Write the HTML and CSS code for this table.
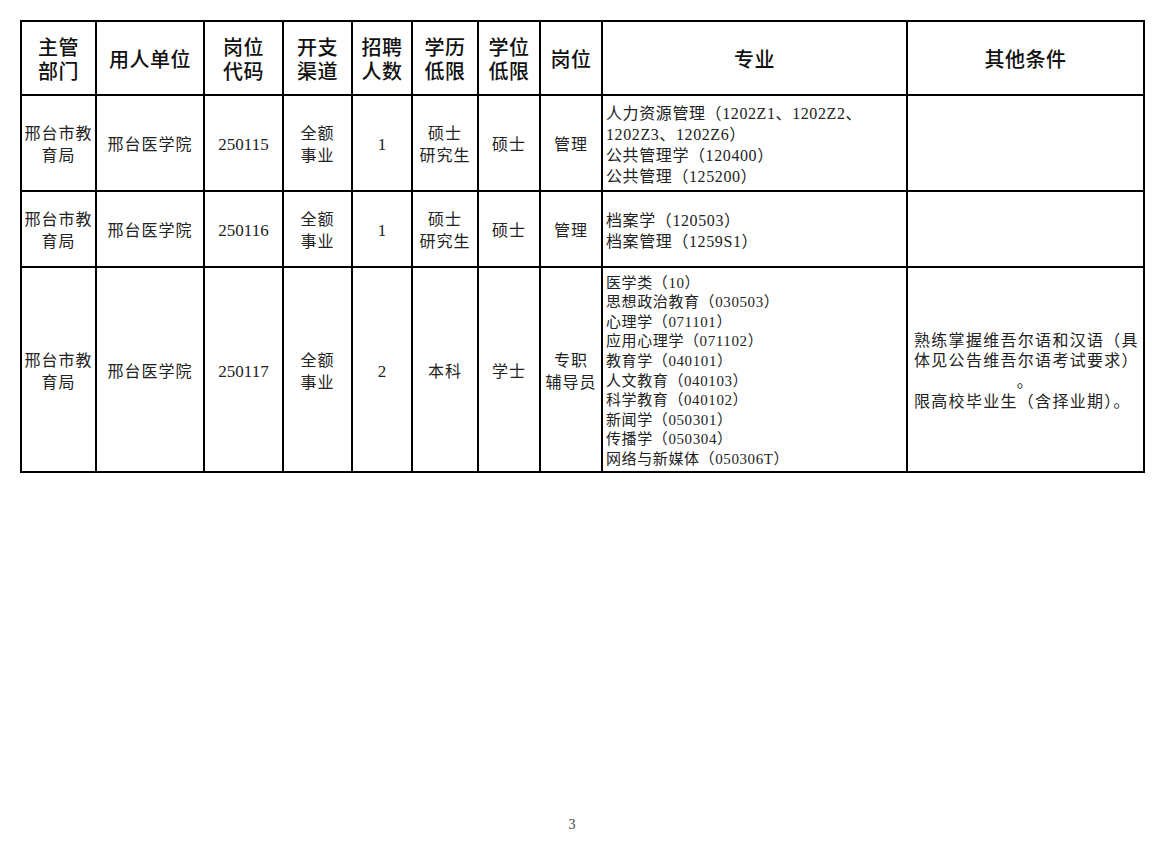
FILE: index.html
```html
<!DOCTYPE html>
<html lang="zh-CN">
<head>
<meta charset="utf-8">
<title>岗位表</title>
<link rel="stylesheet" href="styles.css">
</head>
<body>
<div class="page">
  <table class="posts">
    <colgroup>
      <col class="c1"><col class="c2"><col class="c3"><col class="c4"><col class="c5">
      <col class="c6"><col class="c7"><col class="c8"><col class="c9"><col class="c10">
    </colgroup>
    <thead>
      <tr class="head">
        <th>主管<br>部门</th>
        <th>用人单位</th>
        <th>岗位<br>代码</th>
        <th>开支<br>渠道</th>
        <th>招聘<br>人数</th>
        <th>学历<br>低限</th>
        <th>学位<br>低限</th>
        <th>岗位</th>
        <th>专业</th>
        <th>其他条件</th>
      </tr>
    </thead>
    <tbody>
      <tr class="r1">
        <td>邢台市教<br>育局</td>
        <td>邢台医学院</td>
        <td class="num">250115</td>
        <td>全额<br>事业</td>
        <td class="num">1</td>
        <td>硕士<br>研究生</td>
        <td>硕士</td>
        <td>管理</td>
        <td class="major">人力资源管理（1202Z1、1202Z2、<br>1202Z3、1202Z6）<br>公共管理学（120400）<br>公共管理（125200）</td>
        <td class="cond"></td>
      </tr>
      <tr class="r2">
        <td>邢台市教<br>育局</td>
        <td>邢台医学院</td>
        <td class="num">250116</td>
        <td>全额<br>事业</td>
        <td class="num">1</td>
        <td>硕士<br>研究生</td>
        <td>硕士</td>
        <td>管理</td>
        <td class="major">档案学（120503）<br>档案管理（1259S1）</td>
        <td class="cond"></td>
      </tr>
      <tr class="r3">
        <td>邢台市教<br>育局</td>
        <td>邢台医学院</td>
        <td class="num">250117</td>
        <td>全额<br>事业</td>
        <td class="num">2</td>
        <td>本科</td>
        <td>学士</td>
        <td>专职<br>辅导员</td>
        <td class="major small">医学类（10）<br>思想政治教育（030503）<br>心理学（071101）<br>应用心理学（071102）<br>教育学（040101）<br>人文教育（040103）<br>科学教育（040102）<br>新闻学（050301）<br>传播学（050304）<br>网络与新媒体（050306T）</td>
        <td class="cond">
          <span class="ln">熟练掌握维吾尔语和汉语（具</span>
          <span class="ln">体见公告维吾尔语考试要求）</span>
          <span class="ln mid">。</span>
          <span class="ln">限高校毕业生（含择业期）。</span>
        </td>
      </tr>
    </tbody>
  </table>
  <div class="pageno">3</div>
</div>
</body>
</html>
```

FILE: styles.css
```css
html, body {
  margin: 0;
  padding: 0;
  background: #ffffff;
}

.page {
  padding: 20px 0 0 20px;
  font-family: "Liberation Serif", "Noto Sans CJK SC", serif;
  color: #222222;
}

.posts {
  table-layout: fixed;
  width: 1125px;
  border-collapse: separate;
  border-spacing: 0;
  border-left: 2px solid #000000;
  border-top: 2px solid #000000;
}

.c1 { width: 75px; }
.c2 { width: 108px; }
.c3 { width: 79px; }
.c4 { width: 69px; }
.c5 { width: 60px; }
.c6 { width: 66px; }
.c7 { width: 62px; }
.c8 { width: 62px; }
.c9 { width: 305px; }
.c10 { width: 237px; }

.posts th,
.posts td {
  box-sizing: border-box;
  border-right: 2px solid #000000;
  border-bottom: 2px solid #000000;
  padding: 4px 0 0 0;
  text-align: center;
  vertical-align: middle;
  white-space: nowrap;
  overflow: hidden;
}

.posts th {
  font-size: 20px;
  line-height: 24px;
  font-weight: 500;
  color: #111111;
  letter-spacing: 0.5px;
}

.posts td {
  font-size: 16px;
  line-height: 22px;
  letter-spacing: 1px;
}

.posts td.num {
  font-size: 17px;
  letter-spacing: 0;
}

.head { height: 74px; }
.r1 { height: 96px; }
.r2 { height: 76px; }
.r3 { height: 205px; }

.posts td.major {
  text-align: left;
  padding-left: 3px;
  font-size: 16px;
  line-height: 21px;
  letter-spacing: 0.6px;
}

.posts td.major.small {
  font-size: 15px;
  line-height: 19.6px;
  letter-spacing: 0.6px;
}

.posts td.cond {
  text-align: left;
  padding-left: 6px;
  font-size: 16px;
  line-height: 20.3px;
  letter-spacing: 1.3px;
}

.ln {
  display: block;
}

.ln.mid {
  text-align: center;
  padding-right: 6px;
}

.pageno {
  width: 1104px;
  margin-top: 344px;
  text-align: center;
  font-size: 14px;
  line-height: 16px;
  color: #444444;
}
```
